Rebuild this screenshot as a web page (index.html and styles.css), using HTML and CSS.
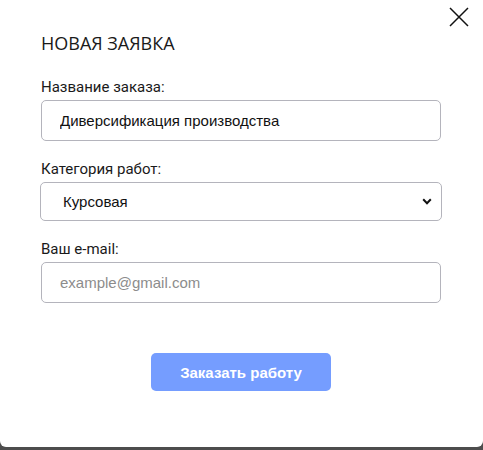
FILE: index.html
```html
<!DOCTYPE html>
<html lang="ru">
<head>
<meta charset="utf-8">
<link rel="stylesheet" href="styles.css">
</head>
<body>
<div class="modal">
  <button class="close" aria-label="Закрыть">
    <svg width="20" height="20" viewBox="0 0 20 20"><path d="M1 1L19 19M19 1L1 19" stroke="#111" stroke-width="1.5" fill="none"/></svg>
  </button>
  <h2 class="title">НОВАЯ ЗАЯВКА</h2>
  <form class="form">
    <div class="field">
      <label class="label">Название заказа:</label>
      <input class="input" type="text" value="Диверсификация производства">
    </div>
    <div class="field">
      <label class="label">Категория работ:</label>
      <div class="select">
        <span class="select-text">Курсовая</span>
        <svg class="chev" width="10" height="7" viewBox="0 0 10 7"><path d="M1.2 1.3L5 5.2L8.8 1.3" stroke="#111" stroke-width="2" fill="none"/></svg>
      </div>
    </div>
    <div class="field">
      <label class="label">Ваш e-mail:</label>
      <input class="input" type="text" placeholder="example@gmail.com">
    </div>
    <div class="actions">
      <button class="submit" type="button">Заказать работу</button>
    </div>
  </form>
</div>
</body>
</html>
```
FILE: styles.css
```css
html, body {
  margin: 0;
  padding: 0;
}
body {
  background: #4d4d4d;
  width: 483px;
  height: 450px;
  overflow: hidden;
}
.modal {
  position: relative;
  box-sizing: border-box;
  width: 483px;
  height: 447px;
  background: #fff;
  border-radius: 0 0 6px 6px;
  padding: 31px 42px 0 41px;
}
.close {
  position: absolute;
  top: 7px;
  right: 14px;
  width: 20px;
  height: 20px;
  padding: 0;
  border: 0;
  background: none;
}
.close svg { display: block; }
.title {
  margin: 0;
  font-family: "Open Sans", sans-serif;
  font-weight: 400;
  font-size: 18px;
  line-height: 24px;
  color: #1a1a1a;
}
.form {
  margin-top: 23px;
  display: flex;
  flex-direction: column;
}
.field {
  display: flex;
  flex-direction: column;
  margin-bottom: 19px;
}
.label {
  font-family: Roboto, sans-serif;
  font-size: 15px;
  line-height: 18px;
  color: #1a1a1a;
  margin-bottom: 4px;
}
.input {
  box-sizing: border-box;
  width: 400px;
  height: 41px;
  margin: 0;
  border: 1px solid #b4b4bc;
  border-radius: 5px;
  padding: 0 18px;
  font-family: "Liberation Sans", Arial, sans-serif;
  font-size: 15px;
  color: #111;
  background: #fff;
  outline: none;
}
.input::placeholder {
  color: #8c8c8c;
}
.select {
  box-sizing: border-box;
  width: 402px;
  margin-left: -1px;
  height: 39px;
  border: 1px solid #b4b4bc;
  border-radius: 5px;
  display: flex;
  align-items: center;
  justify-content: space-between;
  padding: 0 9px 0 22px;
}
.select-text {
  font-family: "Liberation Sans", Arial, sans-serif;
  font-size: 15px;
  color: #111;
}
.chev { display: block; }
.actions {
  display: flex;
  justify-content: center;
  margin-top: 31px;
}
.submit {
  width: 180px;
  height: 38px;
  border: 0;
  border-radius: 5px;
  background: #759dff;
  color: #fff;
  font-family: "Liberation Sans", Arial, sans-serif;
  font-weight: 700;
  font-size: 15px;
  padding: 0;
}
```
